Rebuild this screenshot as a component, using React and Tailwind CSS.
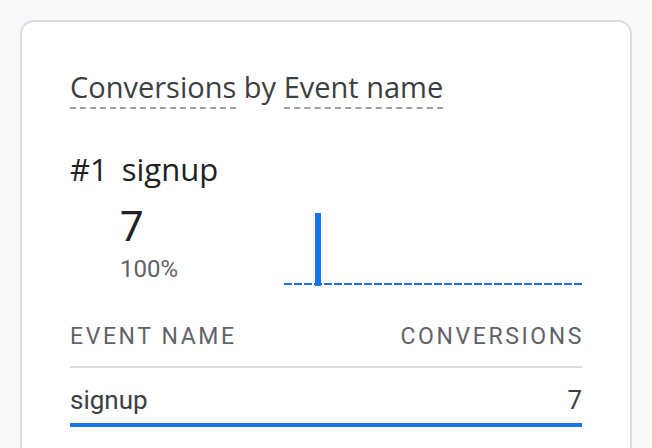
export default function App() {
    return (
        <div className="w-[652px] h-[448px] overflow-hidden bg-[#f8f9fa] pt-5 pl-5" style={{ fontFamily: 'Roboto, "Liberation Sans", sans-serif' }}>
            <div className="w-[612px] h-[460px] bg-white border-2 border-[#dadce0] rounded-[14px] px-[48px] pt-[48px]">
                <div className="text-[29px] leading-[34px] text-[#3c4043] whitespace-nowrap" style={{ fontFamily: '"Open Sans", Roboto, sans-serif' }}>
                    <span className="inline-block border-b-2 border-dashed border-[#9aa0a6] pb-[3px]">Conversions</span>
                    {' by '}
                    <span className="inline-block border-b-2 border-dashed border-[#9aa0a6] pb-[3px]">Event name</span>
                </div>

                <div className="mt-[42px] flex gap-[14px] text-[31px] leading-[36px] text-[#202124]" style={{ fontFamily: '"Open Sans", Roboto, sans-serif' }}>
                    <span>#1</span>
                    <span>signup</span>
                </div>

                <div className="flex items-start">
                    <div className="pl-[50px] w-[214px] mt-[16px]">
                        <div className="text-[42px] leading-[48px] text-[#202124]">7</div>
                        <div className="text-[24px] leading-[28px] text-[#5f6368] mt-[4px]">100%</div>
                    </div>
                    <div className="w-[298px] h-[73px] mt-[26px]">
                        <svg width="298" height="73" viewBox="0 0 298 73">
                            <line x1="0" y1="71" x2="298" y2="71" stroke="#1a73e8" strokeWidth="2" strokeDasharray="8 2" />
                            <rect x="31" y="0" width="6" height="73" fill="#1a73e8" />
                        </svg>
                    </div>
                </div>

                <div className="mt-[37px] flex justify-between text-[23px] leading-[28px] tracking-[2.6px] text-[#5f6368] pb-[15px] border-b-2 border-[#dadce0]">
                    <span>EVENT NAME</span>
                    <span className="-mr-[2px]">CONVERSIONS</span>
                </div>

                <div className="flex justify-between text-[26px] leading-[30px] text-[#3c4043] pt-[17px] pb-[8px] border-b-4 border-[#1a73e8]">
                    <span>signup</span>
                    <span>7</span>
                </div>
            </div>
        </div>
    )
}
